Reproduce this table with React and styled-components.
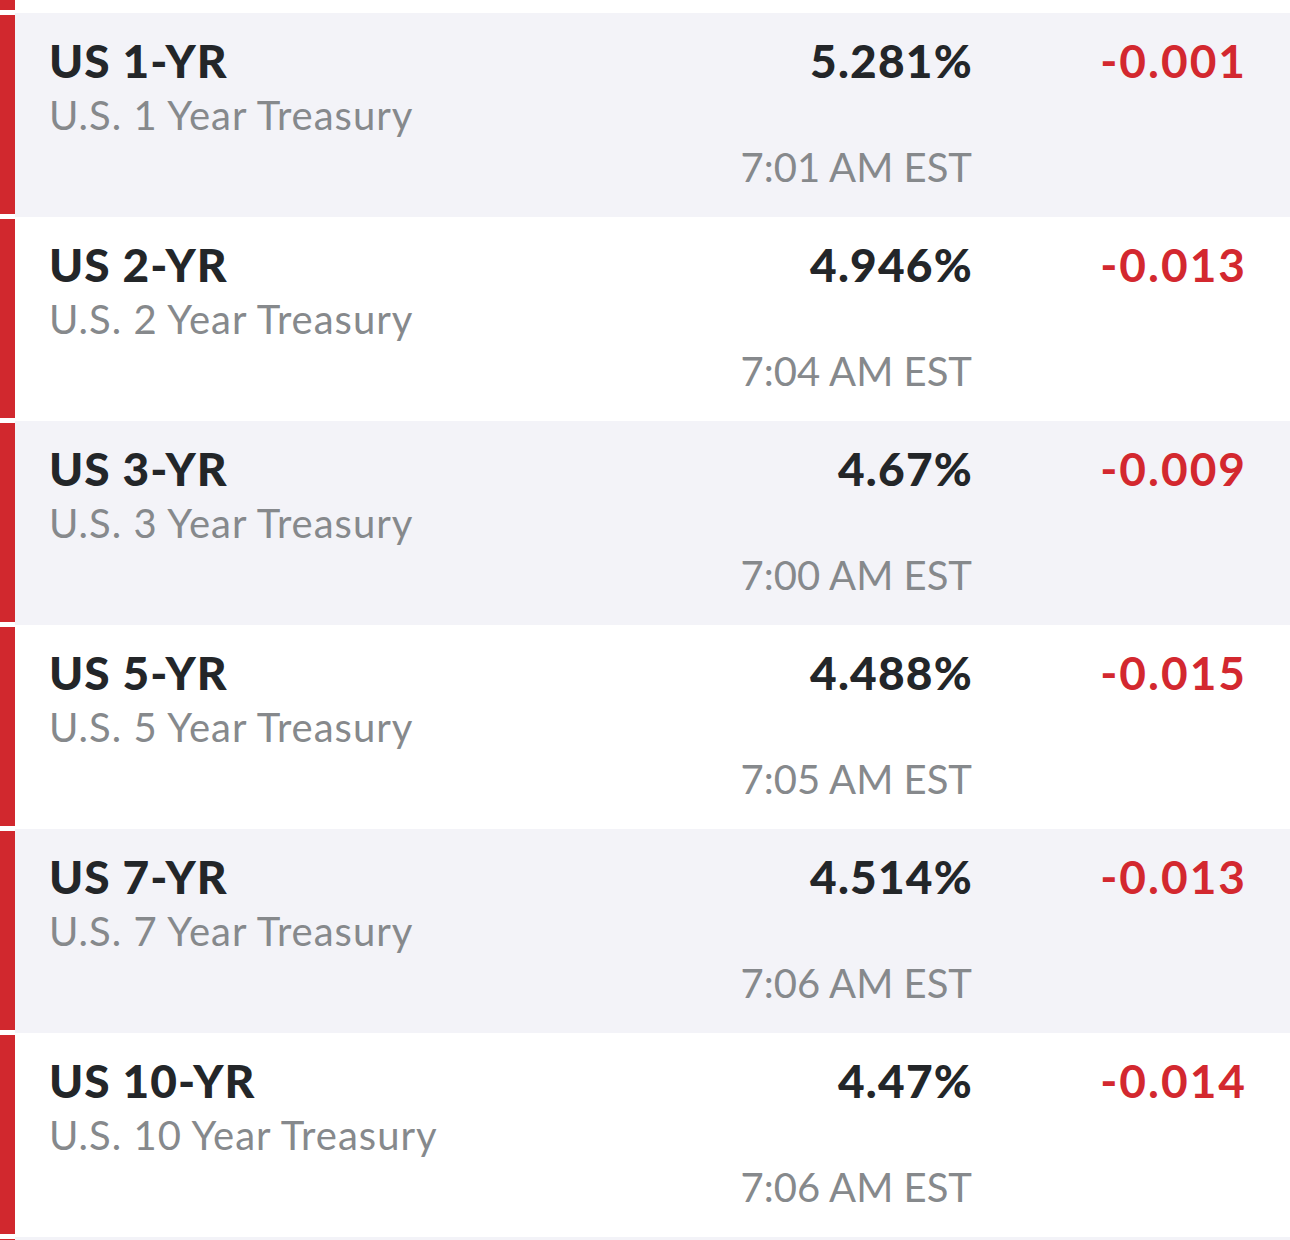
import styled, { createGlobalStyle } from 'styled-components';

const yields = [
    { symbol: "US 1-YR", name: "U.S. 1 Year Treasury", value: "5.281%", change: "-0.001", time: "7:01 AM EST" },
    { symbol: "US 2-YR", name: "U.S. 2 Year Treasury", value: "4.946%", change: "-0.013", time: "7:04 AM EST" },
    { symbol: "US 3-YR", name: "U.S. 3 Year Treasury", value: "4.67%", change: "-0.009", time: "7:00 AM EST" },
    { symbol: "US 5-YR", name: "U.S. 5 Year Treasury", value: "4.488%", change: "-0.015", time: "7:05 AM EST" },
    { symbol: "US 7-YR", name: "U.S. 7 Year Treasury", value: "4.514%", change: "-0.013", time: "7:06 AM EST" },
    { symbol: "US 10-YR", name: "U.S. 10 Year Treasury", value: "4.47%", change: "-0.014", time: "7:06 AM EST" },
];

export default function App() {
    return (
        <>
            <GlobalStyle />
            <List>
                <Edge $top>
                    <BarCell><Bar /></BarCell>
                    <EdgeFill />
                </Edge>
                {yields.map((item, i) => (
                    <Row key={item.symbol}>
                        <BarCell><Bar /></BarCell>
                        <Body $shaded={i % 2 === 0}>
                            <Symbol>{item.symbol}</Symbol>
                            <Value>{item.value}</Value>
                            <Change $negative={item.change.startsWith("-")}>{item.change}</Change>
                            <Name>{item.name}</Name>
                            <Time>{item.time}</Time>
                        </Body>
                    </Row>
                ))}
                <Edge>
                    <BarCell><Bar /></BarCell>
                    <EdgeFill $shaded />
                </Edge>
            </List>
        </>
    )
}

const GlobalStyle = createGlobalStyle`
    body {
        margin: 0;
        background: #ffffff;
        font-family: 'Lato', 'Noto Sans', sans-serif;
        overflow: hidden;
    }
`
const List = styled.div`
    width: 1290px;
    display: flex;
    flex-direction: column;
`
const Row = styled.div`
    height: 204px;
    display: flex;
`
const Edge = styled.div`
    height: ${props => props.$top ? "13px" : "6px"};
    display: flex;
    overflow: hidden;
    & > div:first-child {
        padding: ${props => props.$top ? "0 0 3px" : "2px 0 0"};
    }
`
const EdgeFill = styled.div`
    flex: 1;
    background: ${props => props.$shaded ? "#f3f3f8" : "#ffffff"};
`
const BarCell = styled.div`
    width: 15px;
    display: flex;
    flex-direction: column;
    padding: 2px 0 3px;
    box-sizing: border-box;
    background: #ffffff;
`
const Bar = styled.div`
    flex: 1;
    background: #d1282e;
`
const Body = styled.div`
    flex: 1;
    display: grid;
    grid-template-columns: 1fr auto 273px;
    grid-template-rows: 52px 52px 52px;
    padding: 22px 45px 0 34px;
    box-sizing: border-box;
    background: ${props => props.$shaded ? "#f3f3f8" : "#ffffff"};
`
const Symbol = styled.div`
    grid-column: 1;
    grid-row: 1;
    font-size: 46px;
    line-height: 52px;
    font-weight: 900;
    letter-spacing: 1px;
    color: #232629;
    white-space: nowrap;
`
const Name = styled.div`
    grid-column: 1;
    grid-row: 2;
    font-size: 40px;
    line-height: 52px;
    font-weight: 400;
    letter-spacing: 1px;
    margin-top: 2px;
    color: #86898c;
    white-space: nowrap;
`
const Value = styled.div`
    grid-column: 2;
    grid-row: 1;
    text-align: right;
    font-size: 46px;
    line-height: 52px;
    font-weight: 900;
    letter-spacing: 1.2px;
    margin-right: -1px;
    color: #232629;
`
const Change = styled.div`
    grid-column: 3;
    grid-row: 1;
    text-align: right;
    font-size: 46px;
    line-height: 52px;
    font-weight: 700;
    letter-spacing: 2px;
    margin-right: -2px;
    color: ${props => props.$negative ? "#d3282f" : "#1d9b4a"};
`
const Time = styled.div`
    grid-column: 2;
    grid-row: 3;
    text-align: right;
    font-size: 40px;
    line-height: 52px;
    font-weight: 400;
    margin-top: 2px;
    color: #86898c;
    white-space: nowrap;
`
